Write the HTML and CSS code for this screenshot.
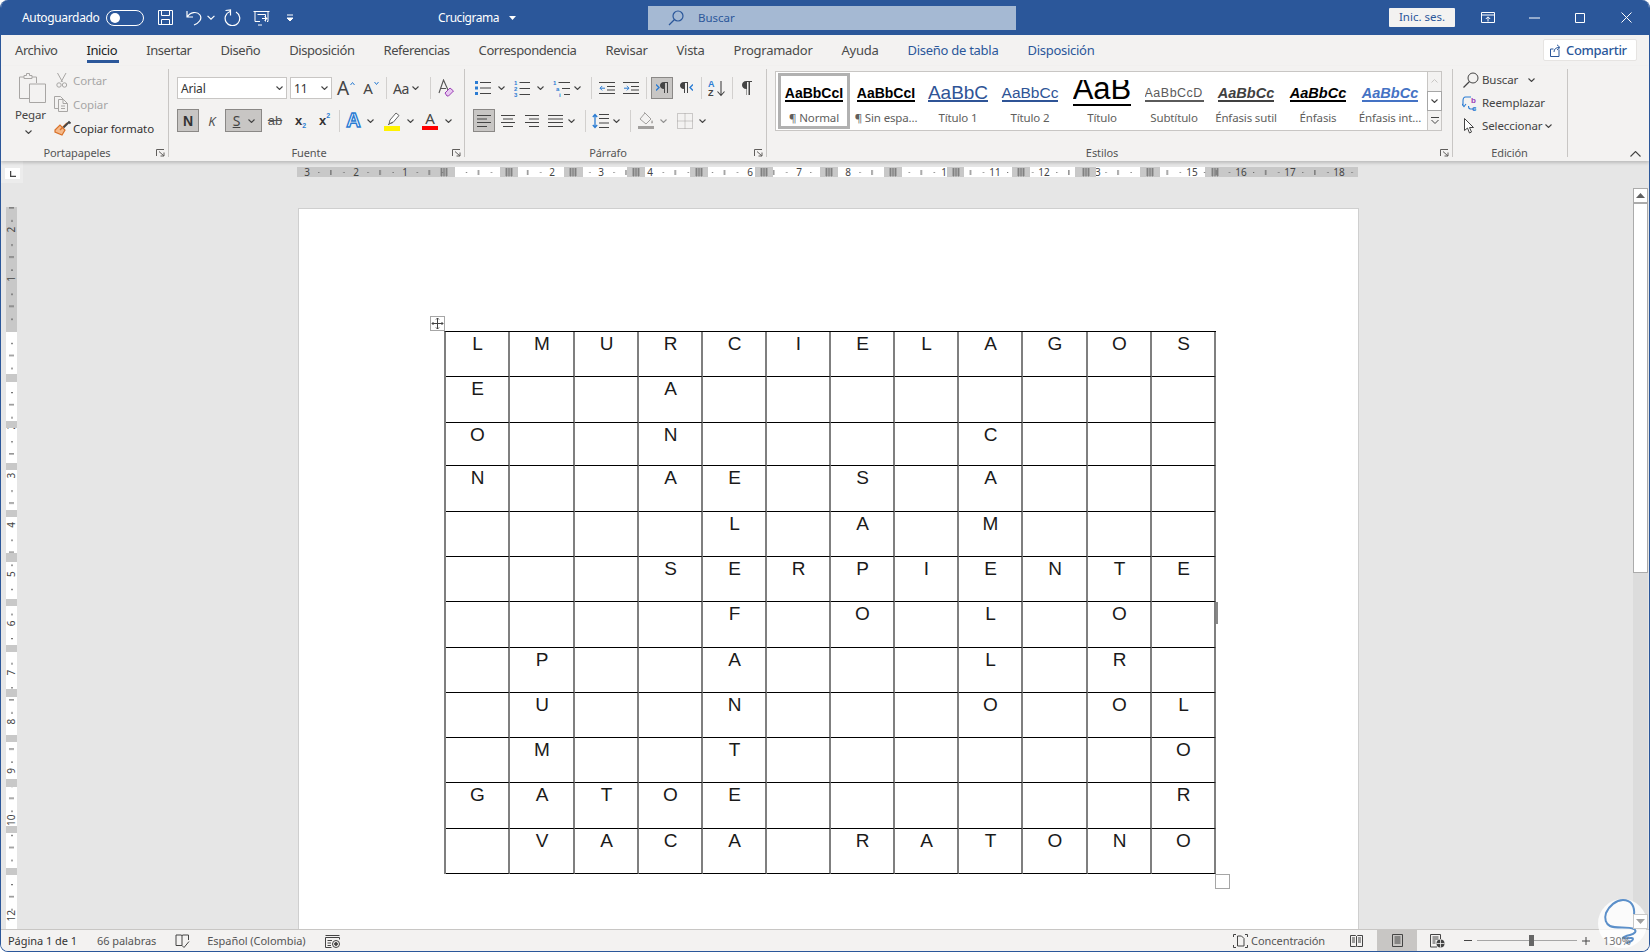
FILE: index.html
```html
<!DOCTYPE html>
<html lang="es">
<head>
<meta charset="utf-8">
<title>Crucigrama - Word</title>
<link rel="stylesheet" href="styles.css">
</head>
<body>
<svg class="sprite" width="0" height="0" aria-hidden="true">
  <symbol id="ch" viewBox="0 0 7 4"><path d="M.5.5l3 3 3-3" fill="none" stroke="#444" stroke-width="1.1"/></symbol>
  <symbol id="launch" viewBox="0 0 9 8"><path d="M.5 7V.5H8M3 2.5l5 4.5M8 3.5V7H4.5" fill="none" stroke="#605e5c"/></symbol>
  <symbol id="hatch" viewBox="0 0 8 9"><path d="M0 1h8M0 3h8M0 5h8M0 7h8M1.5 0v8.500M4 0v8.500M6.500 0v8.500" stroke="#777" stroke-width=".8" fill="none"/></symbol>
</svg>
<div class="app">
  <header class="titlebar">
    <div class="qat">
      <span class="autosave">Autoguardado</span>
      <i class="toggle"></i>
      <i class="w13"></i>
      <svg class="w17" height="17" viewBox="0 0 17 17" fill="none" stroke="#fff"><path d="M1.500 1.500h14v14h-14zM4.500 1.500v5h8v-5M4.500 15.500v-5h8v5"/></svg>
      <i class="w12"></i>
      <svg class="w16" height="17" viewBox="0 0 16 17" fill="none" stroke="#fff" stroke-width="1.2"><path d="M1 2v6h6M1.300 8C4 3 11 2 14 6c2.500 4-1 8-6 10"/></svg>
      <i class="w5"></i>
      <svg class="w8" height="5" viewBox="0 0 7 4" fill="none" stroke="#fff"><path d="M.5.5l3 3 3-3"/></svg>
      <i class="w9"></i>
      <svg class="w17" height="17" viewBox="0 0 17 17" fill="none" stroke="#fff" stroke-width="1.2"><path d="M6 2.500A7.300 7.300 0 1 0 12 3M6.500 6.500V1L1.500 1.500"/></svg>
      <i class="w12"></i>
      <svg class="w17" height="17" viewBox="0 0 17 17" fill="none" stroke="#fff"><path d="M.5 2.500h16M2 2.500v10h5M15 2.500v10h-1M4.500 5.500h8v7M9 9.500h5M11.500 7l2.500 2.500-2.500 2.500M5 16h4"/></svg>
      <i class="w16"></i>
      <svg class="w8" height="8" viewBox="0 0 8 8" fill="none" stroke="#fff"><path d="M1 1h6"/><path d="M1 4l3 3 3-3z" fill="#fff"/></svg>
    </div>
    <div class="doc"><span>Crucigrama</span><svg class="caret" width="7" height="4" viewBox="0 0 7 4"><path d="M0 0h7L3.500 4z" fill="#fff"/></svg></div>
    <div class="search">
      <svg class="search-ic" width="16" height="16" viewBox="0 0 16 16" fill="none" stroke="#2b579a" stroke-width="1.2"><circle cx="10" cy="6" r="5"/><path d="M6.500 9.500L1 15"/></svg>
      <span>Buscar</span>
    </div>
    <div class="spacer"></div>
    <div class="signin">Inic. ses.</div>
    <div class="winbtn"><svg width="14" height="13" viewBox="0 0 14 13" fill="none" stroke="#fff"><path d="M.5 1.500h13v10H.500zM.5 4h13M7 10.500V6M4.800 8L7 5.800 9.200 8"/></svg></div>
    <div class="winbtn"><svg width="11" height="2" viewBox="0 0 11 2"><path d="M0 1h11" stroke="#fff"/></svg></div>
    <div class="winbtn"><svg width="10" height="10" viewBox="0 0 10 10"><path d="M.5.5h9v9h-9z" fill="none" stroke="#fff"/></svg></div>
    <div class="winbtn"><svg width="11" height="11" viewBox="0 0 11 11"><path d="M.5.5l10 10M10.500.5l-10 10" fill="none" stroke="#fff"/></svg></div>
  </header>

  <nav class="tabs">
    <span class="tab">Archivo</span>
    <span class="tab active">Inicio</span>
    <span class="tab">Insertar</span>
    <span class="tab">Diseño</span>
    <span class="tab">Disposición</span>
    <span class="tab">Referencias</span>
    <span class="tab">Correspondencia</span>
    <span class="tab late">Revisar</span>
    <span class="tab late">Vista</span>
    <span class="tab late">Programador</span>
    <span class="tab late">Ayuda</span>
    <span class="tab late ctx">Diseño de tabla</span>
    <span class="tab late ctx">Disposición</span>
    <button class="share">
      <svg width="12" height="13" viewBox="0 0 12 13" fill="none" stroke="#2b579a"><path d="M9 5.500v7H.5V5h3M4 8c0-3 2-4.500 5-4.500M7 .8l3 2.700L7 6"/></svg>
      <span>Compartir</span>
    </button>
  </nav>

  <section class="ribbon">
    <div class="group g1">
      <div class="gbody clip">
        <div class="paste">
          <svg width="28" height="30" viewBox="0 0 28 30" fill="none" stroke="#a8a6a4"><path d="M6 4H1.500v21.500H11"/><path d="M14 4h4.500v6"/><path d="M6 5.500V2.500h2.500V.5h3v2H14v3z" /><path d="M11.500 11h16v18.500h-16z" fill="#f3f2f1"/></svg>
          <span class="paste-t">Pegar</span>
          <svg class="ch" width="7" height="4"><use href="#ch"/></svg>
        </div>
        <div class="cliprows">
          <div class="cr dis"><svg class="w19" height="16" viewBox="0 0 19 16" fill="none" stroke="#a8a6a4"><path d="M3.500 1l5 9M12 1L7 10"/><circle cx="5" cy="13" r="2.200"/><circle cx="10.500" cy="13" r="2.200"/></svg><span>Cortar</span></div>
          <div class="cr dis"><svg class="w19" height="16" viewBox="0 0 19 16" fill="none" stroke="#a8a6a4"><path d="M4 12.500H.5V.5h6l3 3"/><path d="M4.500 3.500h5l4 4v8h-9zM9 3.500v4h4.500M7 10h4M7 12.500h4"/></svg><span>Copiar</span></div>
          <div class="cr"><svg class="w19" height="16" viewBox="0 0 19 16"><path d="M1 10l5-5 5 5-3 5-7-3z" fill="#f5b98a" stroke="#d9722a" stroke-width="1.200"/><path d="M6 10l7-7" stroke="#d9722a" stroke-width="1.500"/><path d="M9.500 7.500L15 2l1.500 1.500" fill="none" stroke="#444" stroke-width="1.800"/></svg><span>Copiar formato</span></div>
        </div>
      </div>
      <div class="glabel">Portapapeles</div>
      <svg class="launch" width="9" height="8"><use href="#launch"/></svg>
    </div>

    <div class="group g2">
      <div class="gbody">
        <div class="row">
          <div class="combo w110"><span>Arial</span><svg width="7" height="4"><use href="#ch"/></svg></div>
          <i class="w3"></i>
          <div class="combo w42"><span>11</span><svg width="7" height="4"><use href="#ch"/></svg></div>
          <div class="tb w28"><span class="bigA">A</span><svg class="sup" width="5" height="3" viewBox="0 0 5 3"><path d="M.5 3L2.500.5 4.500 3" fill="none" stroke="#2b7cd3"/></svg></div>
          <div class="tb w22"><span class="midA">A</span><svg class="sup" width="5" height="3" viewBox="0 0 5 3"><path d="M.5 0l2 2.500 2-2.500" fill="none" stroke="#2b7cd3"/></svg></div>
          <i class="sep w8"></i>
          <div class="tb w32"><span class="aa">Aa</span><svg class="chm" width="7" height="4"><use href="#ch"/></svg></div>
          <i class="sep w16"></i>
          <div class="tb w16"><svg width="16" height="18" viewBox="0 0 16 18"><path d="M1 14L5.500 1 10 11M2.500 9.500H8" fill="none" stroke="#555" stroke-width="1.100"/><path d="M7 14l5-5 3.500 3-5 5H9z" fill="#e7c8f0" stroke="#9a3fb5"/></svg></div>
        </div>
        <div class="row">
          <div class="tb w22 on bold">N</div>
          <div class="tb w26 ital">K</div>
          <div class="tb w37 on"><span class="und">S</span><svg class="chm2" width="7" height="4"><use href="#ch"/></svg></div>
          <div class="tb w26 strike">ab</div>
          <div class="tb w25 bold sm">x<sub class="bl">2</sub></div>
          <div class="tb w23 bold sm">x<sup class="bl">2</sup></div>
          <i class="sep w6"></i>
          <div class="tb w23"><span class="fx">A</span></div>
          <div class="tb w10"><svg width="7" height="4"><use href="#ch"/></svg></div>
          <i class="w4"></i>
          <div class="tb w26"><svg width="16" height="20" viewBox="0 0 16 20"><path d="M5 13l1-4 6-7 3 2.500-6 7zM4 14l1-1 4-2" fill="#fff" stroke="#666"/><path d="M0 15h16v5H0z" fill="#fff200"/></svg></div>
          <div class="tb w10"><svg width="7" height="4"><use href="#ch"/></svg></div>
          <i class="w3"></i>
          <div class="tb w24 colA"><span>A</span><i class="redbar"></i></div>
          <div class="tb w12"><svg width="7" height="4"><use href="#ch"/></svg></div>
        </div>
      </div>
      <div class="glabel">Fuente</div>
      <svg class="launch" width="9" height="8"><use href="#launch"/></svg>
    </div>

    <div class="group g3">
      <div class="gbody">
        <div class="row">
          <div class="tb w20"><svg width="16" height="16" viewBox="0 0 16 16"><path d="M5 2.500h11M5 8h11M5 13.500h11" stroke="#444"/><path d="M0 1h3v3H0zM0 6.500h3v3H0zM0 12h3v3H0z" fill="#2b7cd3"/></svg></div>
          <div class="tb w16"><svg width="7" height="4"><use href="#ch"/></svg></div>
          <div class="tb w26"><svg width="16" height="17" viewBox="0 0 16 17"><path d="M5.500 2.500H16M5.500 8.500H16M5.500 14.500H16" stroke="#444"/><text class="mini" x="0" y="5">1</text><text class="mini" x="0" y="11">2</text><text class="mini" x="0" y="17">3</text></svg></div>
          <div class="tb w10"><svg width="7" height="4"><use href="#ch"/></svg></div>
          <i class="w3"></i>
          <div class="tb w26"><svg width="17" height="17" viewBox="0 0 17 17"><path d="M5.500 2.500H17M9 8.500h8M11 14.500h6" stroke="#444"/><text class="mini" x="0" y="5">1</text><text class="mini" x="3" y="11">a</text><text class="mini" x="6" y="17">i</text></svg></div>
          <div class="tb w6"><svg width="7" height="4"><use href="#ch"/></svg></div>
          <i class="w4"></i>
          <i class="sep w14"></i>
          <div class="tb w18"><svg width="16" height="14" viewBox="0 0 16 14" fill="none"><path d="M0 1.500h16M8 5.500h8M8 9h8M0 12.500h16" stroke="#444"/><path d="M6 7.200H1M3.200 5L1 7.200l2.200 2.200" stroke="#2b7cd3"/></svg></div>
          <div class="tb w29"><svg width="16" height="14" viewBox="0 0 16 14" fill="none"><path d="M0 1.500h16M8 5.500h8M8 9h8M0 12.500h16" stroke="#444"/><path d="M1 7.200h5M3.800 5L6 7.200 3.800 9.400" stroke="#2b7cd3"/></svg></div>
          <i class="sep w2"></i>
          <i class="w4"></i>
          <div class="tb w22 on"><svg width="13" height="12" viewBox="0 0 13 12"><path d="M0 2.500L3 5.500 0 8.500" fill="none" stroke="#2b7cd3" stroke-width="1.400"/><path d="M9 11V1h2v10h1V0H8C5 0 4 2 4 3.500S5 7 8 7v4z" fill="#444"/></svg></div>
          <div class="tb w26"><svg width="13" height="12" viewBox="0 0 13 12"><path d="M13 2.500L10 5.500l3 3" fill="none" stroke="#2b7cd3" stroke-width="1.400"/><path d="M5 11V1h2v10h1V0H4C1 0 0 2 0 3.500S1 7 4 7v4z" fill="#444"/></svg></div>
          <i class="sep w4"></i>
          <div class="tb w28"><svg width="18" height="17" viewBox="0 0 18 17"><text class="sortA" x="0" y="7">A</text><text class="sortZ" x="0" y="16">Z</text><path d="M13 1v14M9.500 11.500L13 15.500l3.500-4" fill="none" stroke="#444" stroke-width="1.100"/></svg></div>
          <i class="sep w2"></i>
          <div class="tb w29"><svg width="11" height="14" viewBox="0 0 11 14"><path d="M5 14V1h1.500v13h1.500V1h2V0H4.500C1.500 0 0 2 0 4s1.500 4 4.500 4v6z" fill="#444"/></svg></div>
        </div>
        <div class="row">
          <div class="tb w22 on"><svg width="14" height="14" viewBox="0 0 14 14"><path d="M0 1.500h14M0 5h10M0 8.500h14M0 12.500h10" stroke="#444"/></svg></div>
          <div class="tb w26"><svg width="14" height="14" viewBox="0 0 14 14"><path d="M0 1.500h14M2 5h10M0 8.500h14M2 12.500h10" stroke="#444"/></svg></div>
          <div class="tb w22"><svg width="14" height="14" viewBox="0 0 14 14"><path d="M0 1.500h14M4 5h10M0 8.500h14M4 12.500h10" stroke="#444"/></svg></div>
          <div class="tb w25"><svg width="15" height="14" viewBox="0 0 15 14"><path d="M0 1.500h15M0 5h15M0 8.500h15M0 12.500h15" stroke="#444"/></svg></div>
          <div class="tb w6"><svg width="7" height="4"><use href="#ch"/></svg></div>
          <i class="w5"></i>
          <i class="sep w12"></i>
          <div class="tb w19"><svg width="17" height="16" viewBox="0 0 17 16" fill="none"><path d="M7 1.500h10M7 5.500h10M7 10h10M7 14.500h10" stroke="#444"/><path d="M3 2v12M.8 4L3 1.500 5.200 4M.8 12L3 14.500 5.200 12" stroke="#2b7cd3" stroke-width="1.300"/></svg></div>
          <div class="tb w12"><svg width="7" height="4"><use href="#ch"/></svg></div>
          <i class="sep w16"></i>
          <div class="tb w16"><svg width="16" height="17" viewBox="0 0 16 17"><path d="M7 1l6 6-5 5-6-5zM7 1L6 .5" fill="none" stroke="#a19f9d"/><path d="M14 8c1 1.500 1.500 3 0 3.500-1.200 0-1-2 0-3.500z" fill="#a19f9d"/><path d="M0 14h16v3H0z" fill="#a19f9d"/></svg></div>
          <div class="tb w18"><svg width="7" height="4"><use href="#ch" opacity=".55"/></svg></div>
          <div class="tb w25"><svg width="16" height="16" viewBox="0 0 16 16" fill="none" stroke="#a19f9d" stroke-dasharray="1 1"><path d="M.5.500h15v15H.500zM.5 8h15M8 .5v15"/></svg></div>
          <div class="tb w10"><svg width="7" height="4"><use href="#ch"/></svg></div>
        </div>
      </div>
      <div class="glabel">Párrafo</div>
      <svg class="launch" width="9" height="8"><use href="#launch"/></svg>
    </div>

    <div class="group g4">
      <div class="gbody gal-wrap">
        <div class="gallery">
          <div class="style sel"><div class="smp"><span class="s-n">AaBbCcI</span></div><div class="lbl">¶ Normal</div></div>
          <div class="style"><div class="smp"><span class="s-n">AaBbCcI</span></div><div class="lbl">¶ Sin espa...</div></div>
          <div class="style"><div class="smp"><span class="s-t1">AaBbC</span></div><div class="lbl">Título 1</div></div>
          <div class="style"><div class="smp"><span class="s-t2">AaBbCc</span></div><div class="lbl">Título 2</div></div>
          <div class="style"><div class="smp smp-big"><span class="s-t">AaB</span></div><div class="lbl lbl-big">Título</div></div>
          <div class="style"><div class="smp"><span class="s-sub">AaBbCcD</span></div><div class="lbl">Subtítulo</div></div>
          <div class="style"><div class="smp"><span class="s-es">AaBbCc</span></div><div class="lbl">Énfasis sutil</div></div>
          <div class="style"><div class="smp"><span class="s-e">AaBbCc</span></div><div class="lbl">Énfasis</div></div>
          <div class="style"><div class="smp"><span class="s-ei">AaBbCc</span></div><div class="lbl">Énfasis int...</div></div>
        </div>
        <div class="galscroll">
          <div class="gs dim"><svg width="7" height="4" viewBox="0 0 7 4"><path d="M.5 3.500l3-3 3 3" fill="none" stroke="#c8c6c4"/></svg></div>
          <div class="gs act"><svg width="7" height="4"><use href="#ch"/></svg></div>
          <div class="gs"><svg width="8" height="7" viewBox="0 0 8 7" fill="none" stroke="#444"><path d="M0 .5h8M.5 3l3.500 3.500L7.500 3"/></svg></div>
        </div>
      </div>
      <div class="glabel">Estilos</div>
      <svg class="launch" width="9" height="8"><use href="#launch"/></svg>
    </div>

    <div class="group g5">
      <div class="gbody edit">
        <div class="er"><svg class="w20" height="16" viewBox="0 0 20 16" fill="none" stroke="#444"><circle cx="11" cy="6" r="5"/><path d="M7.500 9.500L1.500 15.500" stroke-width="1.300"/></svg><span>Buscar</span><svg class="ech1" width="7" height="4"><use href="#ch"/></svg></div>
        <div class="er"><svg class="w20" height="16" viewBox="0 0 20 16"><path d="M9 2H3.500C1.500 2 1 4 1 6v5M0 9l2 2.500L4 9" fill="none" stroke="#2b7cd3" stroke-width="1.100"/><path d="M14 14H8.500C6.500 14 6.500 12.500 6.500 11" fill="none" stroke="#2b7cd3" stroke-width="1.100"/><text class="rb" x="9" y="8">b</text><text class="rc" x="10" y="16">c</text></svg><span>Reemplazar</span></div>
        <div class="er"><svg class="w20" height="16" viewBox="0 0 20 16"><path d="M2.500.5v12l3-2.500 2 5 2-1-2-4.500h4z" fill="#fff" stroke="#444"/></svg><span>Seleccionar</span><svg class="ech2" width="7" height="4"><use href="#ch"/></svg></div>
      </div>
      <div class="glabel">Edición</div>
    </div>
    <div class="collapse"><svg width="11" height="6" viewBox="0 0 11 6"><path d="M.5 5.500l5-5 5 5" fill="none" stroke="#444" stroke-width="1.100"/></svg></div>
  </section>

  <main class="docarea">
    <div class="leftcol">
      <div class="corner"><span class="cornerbox"><svg width="6" height="6" viewBox="0 0 6 6"><path d="M.5 0v5.500H6" fill="none" stroke="#444" stroke-width="1.500"/></svg></span></div>
      <svg class="vruler" width="11" height="722" viewBox="0 0 11 722">
        <defs><pattern id="vt" width="11" height="49.200" y="124" patternUnits="userSpaceOnUse"><rect x="5" y="12" width="2" height="1" fill="#555"/><rect x="3" y="24" width="5" height="1" fill="#555"/><rect x="5" y="37" width="2" height="1" fill="#555"/></pattern></defs>
        <rect width="11" height="722" fill="#c8c8c8"/>
        <rect y="125" width="11" height="597" fill="#fff"/>
        <rect width="11" height="722" fill="url(#vt)"/>
        <g class="rnum">
          <text transform="translate(9 25.600) rotate(-90)">2</text>
          <text transform="translate(9 74.800) rotate(-90)">1</text>
          <text transform="translate(9 222.400) rotate(-90)">2</text>
          <text transform="translate(9 271.600) rotate(-90)">3</text>
          <text transform="translate(9 320.800) rotate(-90)">4</text>
          <text transform="translate(9 370) rotate(-90)">5</text>
          <text transform="translate(9 419.200) rotate(-90)">6</text>
          <text transform="translate(9 468.400) rotate(-90)">7</text>
          <text transform="translate(9 517.600) rotate(-90)">8</text>
          <text transform="translate(9 566.800) rotate(-90)">9</text>
          <text transform="translate(9 619) rotate(-90)">10</text>
          <text transform="translate(9 714.400) rotate(-90)">12</text>
        </g>
        <g fill="#c8c8c8">
          <rect y="167" width="11" height="8"/><rect y="214" width="11" height="7"/><rect y="256" width="11" height="7"/><rect y="303" width="11" height="7"/><rect y="346" width="11" height="9"/><rect y="392" width="11" height="7"/><rect y="438" width="11" height="7"/><rect y="482" width="11" height="8"/><rect y="528" width="11" height="7"/><rect y="572" width="11" height="8"/><rect y="619" width="11" height="7"/><rect y="661" width="11" height="7"/>
        </g>
      </svg>
    </div>
    <div class="workspace">
      <svg class="hruler" width="1061" height="10" viewBox="0 0 1061 10">
        <defs><pattern id="ht" width="49.200" height="10" x="157" patternUnits="userSpaceOnUse"><rect x="12" y="5" width="1" height="1" fill="#555"/><rect x="24" y="3" width="1" height="5" fill="#555"/><rect x="37" y="5" width="1" height="1" fill="#555"/></pattern></defs>
        <rect width="1061" height="10" fill="#c8c8c8"/>
        <g fill="#fff">
          <rect x="158" width="45" height="10"/><rect x="221" width="46" height="10"/><rect x="286" width="44" height="10"/><rect x="348" width="45" height="10"/><rect x="411" width="47" height="10"/><rect x="476" width="47" height="10"/><rect x="541" width="46" height="10"/><rect x="605" width="45" height="10"/><rect x="667" width="48" height="10"/><rect x="733" width="45" height="10"/><rect x="799" width="44" height="10"/><rect x="863" width="45" height="10"/>
        </g>
        <rect width="1061" height="10" fill="url(#ht)"/>
        <g class="rnum" text-anchor="middle">
          <text x="10" y="9">3</text><text x="59" y="9">2</text><text x="108" y="9">1</text>
          <text x="255" y="9">2</text><text x="304" y="9">3</text><text x="353" y="9">4</text>
          <text x="453" y="9">6</text><text x="502" y="9">7</text><text x="551" y="9">8</text>
          <text x="650" y="9">10</text><text x="698" y="9">11</text><text x="747" y="9">12</text>
          <text x="798" y="9">13</text><text x="895" y="9">15</text><text x="944" y="9">16</text><text x="993" y="9">17</text><text x="1042" y="9">18</text>
        </g>
        <g fill="#c8c8c8">
          <rect x="203" width="18" height="10"/><rect x="267" width="19" height="10"/><rect x="330" width="18" height="10"/><rect x="393" width="18" height="10"/><rect x="458" width="18" height="10"/><rect x="523" width="18" height="10"/><rect x="587" width="18" height="10"/><rect x="650" width="17" height="10"/><rect x="715" width="18" height="10"/><rect x="778" width="21" height="10"/><rect x="843" width="20" height="10"/>
        </g>
        <g>
          <use href="#hatch" x="143" y="1" width="8" height="9"/><use href="#hatch" x="208" y="1" width="8" height="9"/><use href="#hatch" x="272" y="1" width="8" height="9"/><use href="#hatch" x="335" y="1" width="8" height="9"/><use href="#hatch" x="398" y="1" width="8" height="9"/><use href="#hatch" x="463" y="1" width="8" height="9"/><use href="#hatch" x="528" y="1" width="8" height="9"/><use href="#hatch" x="592" y="1" width="8" height="9"/><use href="#hatch" x="655" y="1" width="8" height="9"/><use href="#hatch" x="720" y="1" width="8" height="9"/><use href="#hatch" x="785" y="1" width="8" height="9"/><use href="#hatch" x="849" y="1" width="8" height="9"/><use href="#hatch" x="914" y="1" width="8" height="9"/>
        </g>
      </svg>
      <div class="page">
        <div class="tablewrap">
          <div class="movehandle"><svg width="13" height="13" viewBox="0 0 13 13" fill="none" stroke="#444"><path d="M6.500 1v11M1 6.500h11M5 2.500L6.500 1 8 2.500M5 10.500L6.500 12 8 10.500M2.500 5L1 6.500 2.500 8M10.500 5L12 6.500 10.500 8"/></svg></div>
          <div class="xword">
            <div>L</div><div>M</div><div>U</div><div>R</div><div>C</div><div>I</div><div>E</div><div>L</div><div>A</div><div>G</div><div>O</div><div>S</div>
            <div>E</div><div></div><div></div><div>A</div><div></div><div></div><div></div><div></div><div></div><div></div><div></div><div></div>
            <div>O</div><div></div><div></div><div>N</div><div></div><div></div><div></div><div></div><div>C</div><div></div><div></div><div></div>
            <div>N</div><div></div><div></div><div>A</div><div>E</div><div></div><div>S</div><div></div><div>A</div><div></div><div></div><div></div>
            <div></div><div></div><div></div><div></div><div>L</div><div></div><div>A</div><div></div><div>M</div><div></div><div></div><div></div>
            <div></div><div></div><div></div><div>S</div><div>E</div><div>R</div><div>P</div><div>I</div><div>E</div><div>N</div><div>T</div><div>E</div>
            <div></div><div></div><div></div><div></div><div>F</div><div></div><div>O</div><div></div><div>L</div><div></div><div>O</div><div></div>
            <div></div><div>P</div><div></div><div></div><div>A</div><div></div><div></div><div></div><div>L</div><div></div><div>R</div><div></div>
            <div></div><div>U</div><div></div><div></div><div>N</div><div></div><div></div><div></div><div>O</div><div></div><div>O</div><div>L</div>
            <div></div><div>M</div><div></div><div></div><div>T</div><div></div><div></div><div></div><div></div><div></div><div></div><div>O</div>
            <div>G</div><div>A</div><div>T</div><div>O</div><div>E</div><div></div><div></div><div></div><div></div><div></div><div></div><div>R</div>
            <div></div><div>V</div><div>A</div><div>C</div><div>A</div><div></div><div>R</div><div>A</div><div>T</div><div>O</div><div>N</div><div>O</div>
          </div>
          <i class="rowmark"></i>
          <i class="resizehandle"></i>
        </div>
      </div>
    </div>
    <div class="vscroll">
      <div class="sb-btn"><svg width="9" height="5" viewBox="0 0 9 5"><path d="M0 5l4.500-5L9 5z" fill="#606060"/></svg></div>
      <div class="sb-thumb"></div>
      <div class="sb-track"></div>
      <div class="sb-btn sb-down"><svg width="9" height="5" viewBox="0 0 9 5"><path d="M0 0l4.500 5L9 0z" fill="#a0a0a0"/></svg></div>
    </div>
  </main>

  <footer class="status">
    <span class="st st1">Página 1 de 1</span>
    <span class="st st2">66 palabras</span>
    <svg class="st-ic1" width="15" height="14" viewBox="0 0 15 14" fill="none" stroke="#444"><path d="M1 1h5.500L7 2l.500-1H13.500v5M1 1v10.500h6V2M7 11.500l2 2 5-6"/></svg>
    <span class="st st3">Español (Colombia)</span>
    <svg class="st-ic2" width="15" height="14" viewBox="0 0 15 14" fill="none" stroke="#444"><path d="M.5 1.500h14M.5 3.500h14v2M.5 3.500v10h6M2.500 6.500H7M2.500 9H6M2.500 11.500H6"/><circle cx="11" cy="10" r="3.500"/><circle cx="11" cy="10" r="1.400" fill="#444"/></svg>
    <div class="spacer"></div>
    <svg class="st-ic3" width="15" height="14" viewBox="0 0 15 14" fill="none" stroke="#444"><path d="M.5 3V.5H3M12 .5h2.500V3M.5 11v2.500H3M12 13.500h2.500V11M4.500 12V2h4l2.500 2.500V12z"/></svg>
    <span class="st st4">Concentración</span>
    <svg class="st-ic4" width="13" height="12" viewBox="0 0 13 12" fill="none" stroke="#444"><path d="M.5.5h5L6.500 1.500 7.500.5h5v11h-5l-1 .5-1-.5h-5zM6.500 1.500v10M2 3h3M2 5h3M2 7h3M8 3h3M8 5h3M8 7h3"/></svg>
    <div class="viewon"><svg width="11" height="13" viewBox="0 0 11 13" fill="none" stroke="#444"><path d="M.5.5h10v12H.5zM2.500 3h6M2.500 5h6M2.500 7h6M2.500 9h6"/></svg></div>
    <svg class="st-ic5" width="15" height="14" viewBox="0 0 15 14" fill="none" stroke="#444"><path d="M7 13H.5V.5h10V5M2.500 3h6M2.500 5h6M2.500 7h3M2.500 9h3"/><circle cx="10.500" cy="9.500" r="4" fill="#444" stroke="none"/><path d="M6.500 9.500h8M10.500 5.500v8" stroke="#f3f2f1" stroke-width=".8"/></svg>
    <svg class="st-min" width="8" height="1"><path d="M0 .5h8" stroke="#444"/></svg>
    <div class="slider"><i class="slider-thumb"></i></div>
    <svg class="st-plus" width="8" height="8" viewBox="0 0 8 8"><path d="M0 4h8M4 0v8" stroke="#444"/></svg>
    <span class="st st5">130%</span>
  </footer>

  <svg class="watermark" width="60" height="62" viewBox="0 0 60 62">
    <circle cx="32.500" cy="33.500" r="24.500" fill="#fff" fill-opacity=".82"/>
    <path d="M44 25c1-9-3-15-11-15-7 0-14 6-17 13-2 6 0 11 4 13 6 3 18 0 24 3 3 2 1 5-4 6-5 1-8 3-7 3 3 1 10-1 10 1s-4 3-6 4" fill="none" stroke="#5b8fc9" stroke-width="2" stroke-linecap="round"/>
  </svg>
</div>
</body>
</html>
```
FILE: styles.css
```css
* { box-sizing: border-box; }
html, body { margin: 0; height: 100%; background: #fff; }
body { width: 1650px; height: 952px; overflow: hidden; font: 12px "Noto Sans", "Open Sans", sans-serif; color: #444; }
i { display: block; flex: none; }
.sprite { position: absolute; }
svg { display: block; flex: none; }

.w2{width:2px}.w3{width:3px}.w4{width:4px}.w5{width:5px}.w6{width:6px}.w8{width:8px}.w9{width:9px}.w10{width:10px}
.w12{width:12px}.w13{width:13px}.w14{width:14px}.w16{width:16px}.w17{width:17px}.w18{width:18px}.w19{width:19px}.w20{width:20px}
.w22{width:22px}.w23{width:23px}.w24{width:24px}.w25{width:25px}.w26{width:26px}.w28{width:28px}.w29{width:29px}.w32{width:32px}
.w37{width:37px}.w42{width:42px}.w110{width:110px}

.app {
  position: relative; width: 1650px; height: 952px; display: flex; flex-direction: column;
  border: 1px solid #2b579a; border-top: 0; border-radius: 8px; overflow: hidden; background: #f3f2f1;
}
.spacer { flex: 1; }

/* title bar */
.titlebar { height: 35px; flex: none; background: #2b579a; color: #fff; display: flex; align-items: center; }
.qat { width: 437px; flex: none; display: flex; align-items: center; padding-left: 21px; }
.autosave { width: 84px; flex: none; font-size: 12px; letter-spacing: -.35px; white-space: nowrap; }
.toggle { width: 38px; height: 16px; border: 1px solid #fff; border-radius: 8px; position: relative; }
.toggle::before { content: ""; position: absolute; left: 3px; top: 2px; width: 10px; height: 10px; background: #fff; border-radius: 50%; }
.doc { width: 210px; flex: none; display: flex; align-items: center; gap: 10px; font-size: 12px; letter-spacing: -.45px; }
.search { width: 368px; height: 24px; flex: none; background: #a5b9d3; color: #2b579a; display: flex; align-items: center; padding-left: 20px; gap: 14px; font-size: 11.5px; }
.signin { width: 66px; height: 19px; margin-right: 10px; background: #f3f2f1; color: #2b579a; font-size: 11.500px; text-align: center; line-height: 18px; border-radius: 1px; }
.winbtn { width: 46px; height: 35px; display: flex; align-items: center; justify-content: center; }

/* tabs */
.tabs { height: 31px; flex: none; display: flex; gap: 29px; padding: 4px 12px 0 14px; font-size: 13px; }
.tab { position: relative; color: #4a4a4a; line-height: 23px; letter-spacing: -.43px; white-space: nowrap; }
.tab.late { letter-spacing: -.27px; }
.tab.active { color: #201f1e; }
.tab.active::after { content: ""; position: absolute; left: 0; right: -2px; top: 21px; height: 3px; background: #2b579a; }
.tab.ctx { color: #2b579a; }
.share { margin-left: auto; width: 94px; height: 22px; background: #fff; border: 1px solid #e6e4e2; border-radius: 2px; display: flex; align-items: center; gap: 4px; padding: 0 0 0 6px; color: #2b579a; font: 500 13px "Noto Sans", sans-serif; letter-spacing: -.3px; }

/* ribbon */
.ribbon { height: 95px; flex: none; display: flex; position: relative; box-shadow: 0 2px 3px rgba(0,0,0,.18); z-index: 2; background: #f3f2f1; }
.group { position: relative; flex: none; display: flex; flex-direction: column; }
.group::after { content: ""; position: absolute; right: 0; top: 3px; bottom: 4px; width: 1px; background: #c8c6c4; }
.g1 { width: 168px; } .g2 { width: 296px; } .g3 { width: 302px; } .g4 { width: 686px; } .g5 { width: 115px; }
.gbody { flex: 1; padding: 11px 0 0 8px; display: flex; flex-direction: column; gap: 10px; }
.glabel { height: 16px; line-height: 16px; text-align: center; font-size: 11px; color: #555; padding-right: 16px; letter-spacing: -.1px; }
.g5 .glabel { padding-right: 2px; }
.launch { position: absolute; right: 4px; bottom: 4px; }

.clip { flex-direction: row; padding: 0; gap: 0; }
.paste { width: 53px; display: flex; flex-direction: column; align-items: flex-start; padding: 7px 0 0 17px; }
.paste-t { font-size: 11.500px; letter-spacing: -.2px; color: #444; margin: 3px 0 0 -3px; line-height: 17px; }
.paste .ch { margin: 7px 0 0 7px; }
.cliprows { padding-top: 2px; }
.cr { height: 24px; display: flex; align-items: center; font-size: 11.5px; color: #333; white-space: nowrap; letter-spacing: -.1px; }
.cr.dis { color: #a6a6a6; }

.row { height: 22px; display: flex; align-items: stretch; }
.row + .row { height: 23px; }
.combo { background: #fff; border: 1px solid #c8c6c4; display: flex; align-items: center; justify-content: space-between; padding: 0 3px 0 3px; font: 12px "Noto Sans", sans-serif; letter-spacing: -.2px; color: #333; flex: none; }
.tb { flex: none; display: flex; align-items: center; justify-content: center; position: relative; color: #444; font: 13px "Liberation Sans", sans-serif; }
.tb.on { background: #c8c6c4; border: 1px solid #8a8886; }
.bold { font-weight: 700; font-size: 14px; color: #333; }
.ital { font-style: italic; font-family: "Noto Sans", sans-serif; font-size: 13px; color: #555; }
.und { text-decoration: underline; margin-right: 14px; font-size: 14px; font-family: "Noto Sans", sans-serif; }
.chm2 { position: absolute; right: 6px; top: 9px; }
.chm { margin-left: 3px; }
.strike { text-decoration: line-through; color: #555; font-size: 13px; }
.sm { font-size: 13px; }
.tb sub, .tb sup { font-size: 7px; line-height: 0; }
.tb sub { vertical-align: -3px; position: relative; top: 5px; }
.tb sup { position: relative; top: -5px; }
.bl { color: #2b7cd3; }
.bigA { font: 19px "Noto Sans", sans-serif; color: #444; }
.midA { font: 15px "Noto Sans", sans-serif; color: #444; }
.sup { position: relative; top: -5px; margin-left: 1px; }
.aa { font: 14px "Noto Sans", sans-serif; color: #444; letter-spacing: -.3px; }
.fx { font: 700 20px "Liberation Sans", sans-serif; color: #fff; -webkit-text-stroke: 1.4px #2b7cd3; }
.colA { flex-direction: column; font-size: 15px; line-height: 16px; font-family: "Noto Sans", sans-serif; }
.colA span { margin-top: -1px; }
.redbar { width: 16px; height: 4px; background: #f00; margin-top: 0; }
.sep { display: flex; justify-content: center; align-items: center; }
.sep::before { content: ""; width: 1px; height: 22px; background: #d2d0ce; }
.mini { font: 700 6px "Liberation Sans", sans-serif; fill: #2b7cd3; }
.sortA { font: 700 9px "Liberation Sans", sans-serif; fill: #2b7cd3; }
.sortZ { font: 700 9px "Liberation Sans", sans-serif; fill: #444; }
.rb { font: 700 8px "Liberation Sans", sans-serif; fill: #9a3fb5; }
.rc { font: 700 8px "Liberation Sans", sans-serif; fill: #2b7cd3; }

.gal-wrap { flex-direction: row; gap: 0; padding: 5px 0 0 8px; }
.gallery { width: 652px; height: 60px; flex: none; background: #fff; border: 1px solid #c8c6c4; border-right: 0; display: flex; padding: 1px 0 0 2px; }
.style { width: 72px; height: 56px; flex: none; display: flex; flex-direction: column; align-items: center; }
.style.sel { box-shadow: inset 0 0 0 3px #b1b1b1; }
.smp { height: 29px; flex: none; display: flex; align-items: flex-end; white-space: nowrap; font-family: "Liberation Sans", sans-serif; line-height: 14px; }
.smp span { display: inline-block; }
.s-n { font-weight: 700; font-size: 14px; color: #000; border-bottom: 2px solid #000; }
.s-t1 { font-size: 19px; color: #2f5496; border-bottom: 2px solid #2f5496; }
.s-t2 { font-size: 15.500px; color: #2f5496; border-bottom: 2px solid #2f5496; }
.smp-big { margin-top: 7px; height: 26px; overflow: hidden; }
.s-t { font-size: 31px; line-height: 18px; padding-bottom: 6px; color: #000; border-bottom: 2px solid #000; }
.s-sub { font-size: 12.500px; color: #5a5a5a; letter-spacing: .5px; border-bottom: 2px solid #5a5a5a; width: 59px; overflow: hidden; }
.s-es { font-weight: 700; font-style: italic; font-size: 14.500px; color: #404040; border-bottom: 2px solid #404040; }
.s-e { font-weight: 700; font-style: italic; font-size: 14.500px; color: #000; border-bottom: 2px solid #000; }
.s-ei { font-weight: 700; font-style: italic; font-size: 14.500px; color: #4472c4; border-bottom: 2px solid #4472c4; }
.lbl { margin-top: 6px; line-height: 20px; font-size: 11.500px; color: #605e5c; white-space: nowrap; letter-spacing: -.15px; }
.lbl-big { margin-top: 2px; }
.galscroll { width: 15px; height: 60px; flex: none; border: 1px solid #c8c6c4; border-left: 1px solid #c8c6c4; display: flex; flex-direction: column; background: #f3f2f1; }
.gs { flex: 1; display: flex; align-items: center; justify-content: center; }
.gs.act { background: #fff; border-top: 1px solid #a6a6a6; border-bottom: 1px solid #a6a6a6; margin: 0 -1px; border-left: 1px solid #a6a6a6; border-right: 1px solid #a6a6a6; }

.edit { padding: 2px 0 0 9px; gap: 0; }
.er { height: 23px; display: flex; align-items: center; font-size: 11.500px; color: #444; white-space: nowrap; letter-spacing: -.1px; }
.ech1 { margin-left: 10px; }
.ech2 { margin-left: 3px; }
.collapse { flex: 1; position: relative; }
.collapse svg { position: absolute; right: 8px; bottom: 4px; }

/* document */
.docarea { height: 768px; flex: none; display: flex; background: #e6e6e6; position: relative; }
.leftcol { width: 22px; flex: none; }
.corner { width: 22px; height: 22px; background: #ececec; padding: 7px 0 0 4px; }
.cornerbox { display: flex; width: 15px; height: 11px; background: #fff; align-items: center; justify-content: center; }
.vruler { margin: 24px 0 0 5px; overflow: visible; }
.workspace { flex: 1; min-width: 0; overflow: hidden; }
.hruler { margin: 6px 0 0 274px; overflow: visible; }
.page { margin: 31px 0 0 275px; width: 1061px; height: 800px; background: #fff; border: 1px solid #cfcfcf; padding: 122px 0 0 145px; }
.tablewrap { position: relative; width: 772px; }
.xword {
  display: grid;
  grid-template-columns: 64px 65px 64px 64px 64px 64px 64px 64px 64px 65px 64px 64px;
  grid-template-rows: 45px 46px 43px 46px 45px 45px 46px 45px 45px 45px 46px 45px;
  border-top: 1px solid #000; border-left: 2px solid #7f7f7f;
  font: 19px/22px "Liberation Sans", sans-serif; color: #1a1a1a; text-align: center;
}
.xword div { border-right: 2px solid #7f7f7f; border-bottom: 1px solid #000; padding: 1px 0 0 1px; }
.movehandle { position: absolute; left: -14px; top: -15px; width: 15px; height: 15px; border: 1px solid #a6a6a6; background: #fff; display: flex; align-items: center; justify-content: center; }
.rowmark { position: absolute; left: 772px; top: 271px; width: 2px; height: 22px; background: #888; }
.resizehandle { position: absolute; left: 771px; top: 543px; width: 15px; height: 15px; border: 1px solid #a6a6a6; background: #fff; }
.vscroll { width: 15px; flex: none; margin: 27px 1px 0 0; display: flex; flex-direction: column; }
.sb-btn { height: 15px; flex: none; background: #fff; border: 1px solid #ababab; display: flex; align-items: center; justify-content: center; }
.sb-thumb { height: 370px; flex: none; background: #fff; border: 1px solid #ababab; }
.sb-track { flex: 1; background: #dcdcdc; }
.sb-down { position: relative; z-index: 6; border-color: #c8c8c8; }

/* status */
.status { height: 22px; flex: none; display: flex; align-items: center; position: relative; border-top: 1px solid #c8c6c4; font-size: 11px; background: #f3f2f1; }
.st { white-space: nowrap; color: #555; letter-spacing: -.05px; }
.st1 { margin-left: 7px; color: #333; }
.st2 { margin-left: 20px; }
.st-ic1 { margin-left: 19px; }
.st3 { margin-left: 17px; }
.st-ic2 { margin-left: 19px; }
.st-ic3 { margin-right: 3px; }
.st4 { width: 84px; flex: none; }
.st-ic4 { margin-left: 15px; }
.viewon { width: 40px; height: 22px; margin-left: 14px; background: #c8c6c4; display: flex; align-items: center; justify-content: center; }
.st-ic5 { margin-left: 13px; }
.st-min { margin-left: 19px; }
.slider { width: 100px; height: 1px; margin-left: 5px; background: #a6a6a6; position: relative; }
.slider-thumb { position: absolute; left: 52px; top: -5px; width: 5px; height: 11px; background: #666; }
.st-plus { margin-left: 5px; }
.st5 { width: 59px; flex: none; padding-left: 13px; color: #777; position: relative; z-index: 6; }
.watermark { position: absolute; right: -1px; bottom: -1px; z-index: 5; }
.rnum text { font: 10px "Noto Sans", sans-serif; fill: #444; }
```
